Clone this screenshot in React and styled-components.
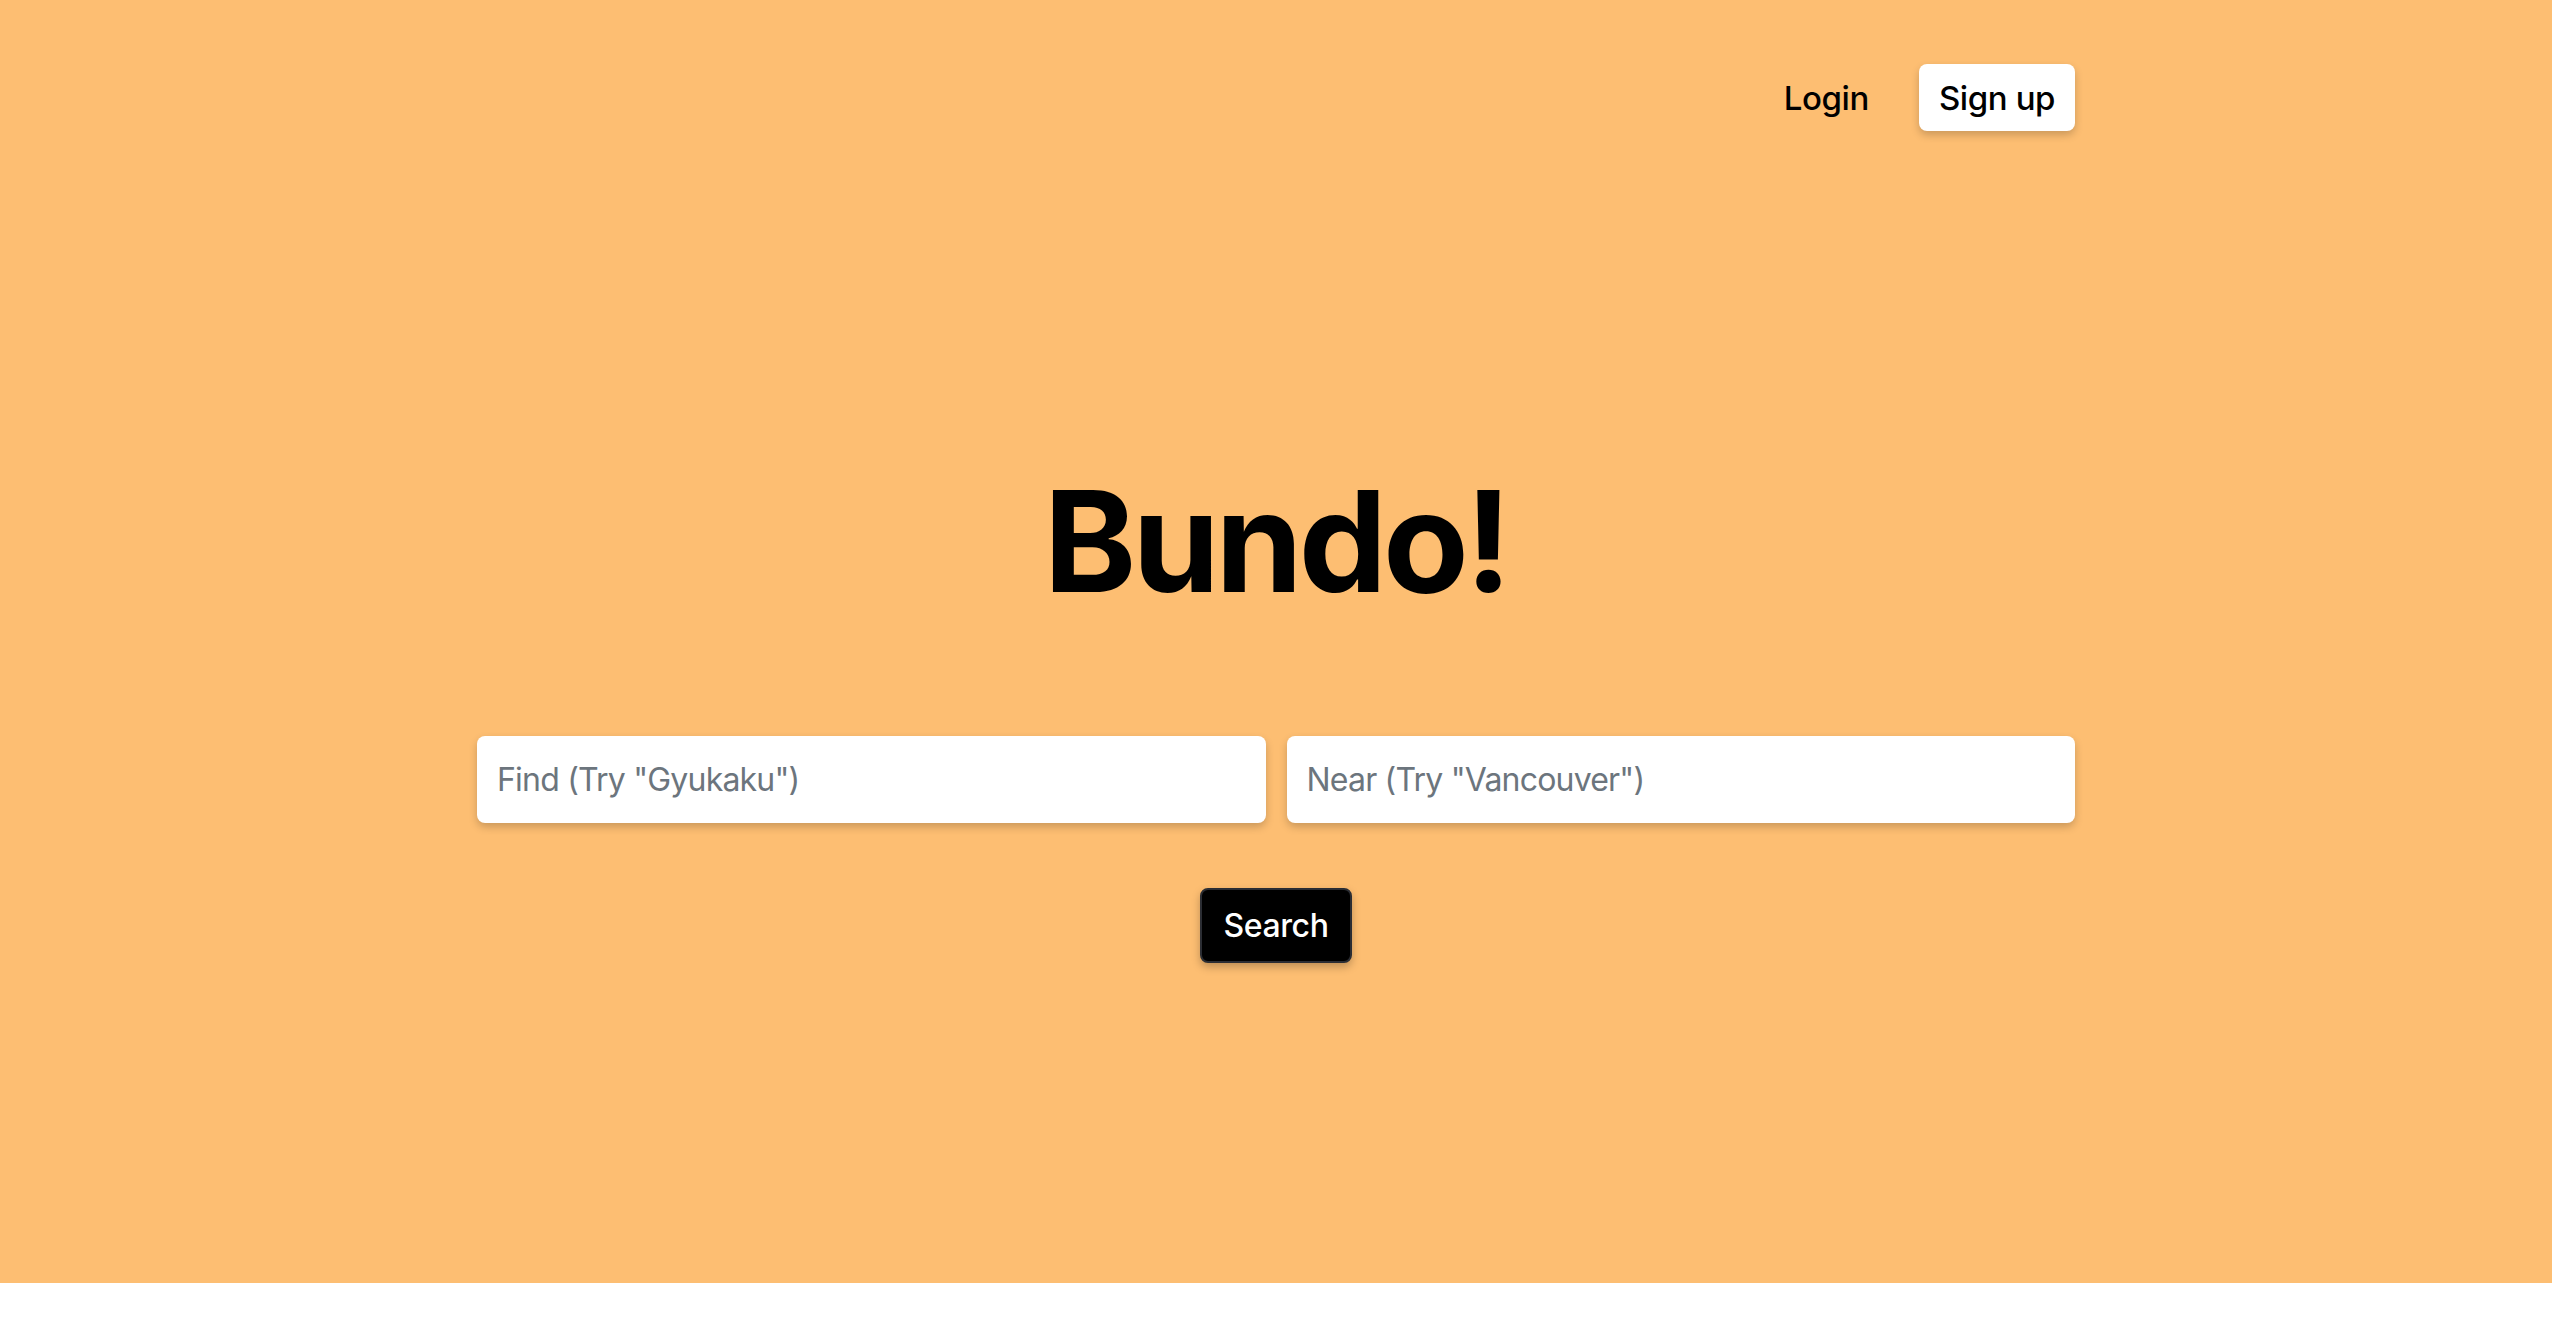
import styled, { createGlobalStyle } from 'styled-components';

const GlobalStyle = createGlobalStyle`
    body {
        margin: 0;
        font-family: Inter, "Noto Sans", sans-serif;
        background: #FFFFFF;
    }
`

export default function App() {
    return (
        <>
            <GlobalStyle />
            <Hero>
                <Nav>
                    <NavLink href="#">Login</NavLink>
                    <SignUp>Sign up</SignUp>
                </Nav>
                <Main>
                    <Title>Bundo!</Title>
                    <SearchRow>
                        <SearchInput placeholder={'Find (Try "Gyukaku")'} />
                        <SearchInput placeholder={'Near (Try "Vancouver")'} />
                    </SearchRow>
                    <SearchButton>Search</SearchButton>
                </Main>
            </Hero>
        </>
    );
}

const Hero = styled.div`
    height: 1283px;
    background: #FDBE72;
    display: flex;
    flex-direction: column;
    align-items: center;
`

const Nav = styled.nav`
    width: 1598px;
    padding-top: 64px;
    display: flex;
    justify-content: flex-end;
    align-items: center;
    gap: 50px;
`

const NavLink = styled.a`
    font-size: 33px;
    font-weight: 500;
    letter-spacing: -0.4px;
    color: #000000;
    text-decoration: none;
`

const SignUp = styled.button`
    width: 156px;
    height: 67px;
    border: none;
    border-radius: 8px;
    background: #FFFFFF;
    color: #000000;
    font-family: inherit;
    font-size: 33px;
    font-weight: 500;
    letter-spacing: -0.4px;
    box-shadow: 0 4px 8px rgba(0, 0, 0, 0.2);
    cursor: pointer;
`

const Main = styled.main`
    display: flex;
    flex-direction: column;
    align-items: center;
    width: 1598px;
`

const Title = styled.h1`
    margin: 340px 0 0;
    font-size: 140px;
    line-height: 1;
    font-weight: 700;
    letter-spacing: -4px;
    color: #000000;
`

const SearchRow = styled.div`
    margin-top: 125px;
    width: 100%;
    display: grid;
    grid-template-columns: 1fr 1fr;
    gap: 21px;
`

const SearchInput = styled.input`
    height: 87px;
    box-sizing: border-box;
    border: none;
    border-radius: 8px;
    padding: 0 20px;
    font-family: inherit;
    font-size: 32px;
    letter-spacing: -0.8px;
    color: #212529;
    background: #FFFFFF;
    box-shadow: 0 4px 8px rgba(0, 0, 0, 0.2);
    outline: none;

    &::placeholder {
        color: #6C757D;
    }
`

const SearchButton = styled.button`
    margin-top: 65px;
    width: 152px;
    height: 75px;
    border: 2px solid #2B2D33;
    border-radius: 8px;
    background: #000000;
    color: #FFFFFF;
    font-family: inherit;
    font-size: 32px;
    font-weight: 500;
    letter-spacing: -0.4px;
    box-shadow: 0 4px 8px rgba(0, 0, 0, 0.25);
    cursor: pointer;
`
